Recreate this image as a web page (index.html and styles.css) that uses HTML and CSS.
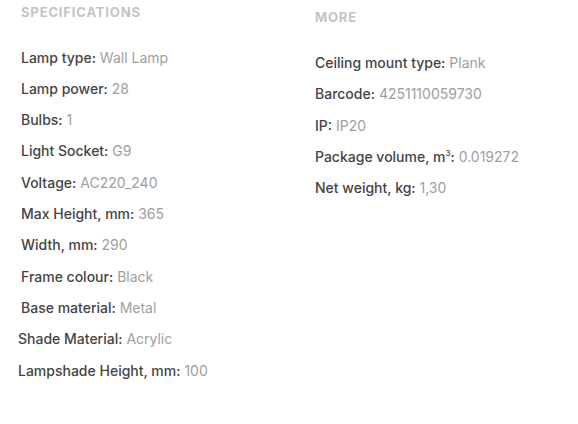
FILE: index.html
```html
<html>
<head>
<meta charset="utf-8">
<link rel="stylesheet" href="styles.css">
</head>
<body>
<div class="specs">
  <section class="col col-main">
    <h3 class="col-title">SPECIFICATIONS</h3>
    <ul class="prop-list">
      <li class="prop"><span class="prop-name">Lamp type:</span> <span class="prop-val">Wall Lamp</span></li>
      <li class="prop"><span class="prop-name">Lamp power:</span> <span class="prop-val">28</span></li>
      <li class="prop"><span class="prop-name">Bulbs:</span> <span class="prop-val">1</span></li>
      <li class="prop"><span class="prop-name">Light Socket:</span> <span class="prop-val">G9</span></li>
      <li class="prop"><span class="prop-name">Voltage:</span> <span class="prop-val">AC220_240</span></li>
      <li class="prop"><span class="prop-name">Max Height, mm:</span> <span class="prop-val">365</span></li>
      <li class="prop"><span class="prop-name">Width, mm:</span> <span class="prop-val">290</span></li>
      <li class="prop"><span class="prop-name">Frame colour:</span> <span class="prop-val">Black</span></li>
      <li class="prop"><span class="prop-name">Base material:</span> <span class="prop-val">Metal</span></li>
    </ul>
    <ul class="prop-list prop-list-extra">
      <li class="prop"><span class="prop-name">Shade Material:</span> <span class="prop-val">Acrylic</span></li>
      <li class="prop"><span class="prop-name">Lampshade Height, mm:</span> <span class="prop-val">100</span></li>
    </ul>
  </section>
  <section class="col col-more">
    <h3 class="col-title">MORE</h3>
    <ul class="prop-list">
      <li class="prop"><span class="prop-name">Ceiling mount type:</span> <span class="prop-val">Plank</span></li>
      <li class="prop"><span class="prop-name">Barcode:</span> <span class="prop-val">4251110059730</span></li>
      <li class="prop"><span class="prop-name">IP:</span> <span class="prop-val">IP20</span></li>
      <li class="prop"><span class="prop-name">Package volume, m<sup>3</sup>:</span> <span class="prop-val">0.019272</span></li>
      <li class="prop"><span class="prop-name">Net weight, kg:</span> <span class="prop-val">1,30</span></li>
    </ul>
  </section>
</div>
</body>
</html>
```

FILE: styles.css
```css
body{
    margin: 0;
    background: #fff;
    font-family: Inter, "Liberation Sans", sans-serif;
    font-size: 14px;
}

.specs{
    display: flex;
    padding-left: 21px;
}

.col-main{
    width: 294px;
    padding-top: 4px;
}

.col-more{
    padding-top: 9px;
}

.col-title{
    margin: 0 0 27.5px 0;
    font-size: 13px;
    line-height: 16px;
    font-weight: 700;
    letter-spacing: 0.85px;
    color: #c4c4c4;
}

.col-more .col-title{
    margin-bottom: 28.4px;
}

.prop-list{
    list-style: none;
    margin: 0;
    padding: 0;
}

.prop{
    line-height: 20px;
    margin-bottom: 11.3px;
    white-space: nowrap;
}

.col-more .prop{
    margin-bottom: 11.1px;
}

.prop-list-extra{
    margin-left: -3px;
    margin-top: 1.7px;
}

.prop-list-extra .prop{
    margin-bottom: 12px;
}

.prop-name{
    font-weight: 500;
    color: #444;
}

.prop-name sup{
    font-size: 8px;
    line-height: 0;
}

.prop-val{
    color: #9e9e9e;
}
```
